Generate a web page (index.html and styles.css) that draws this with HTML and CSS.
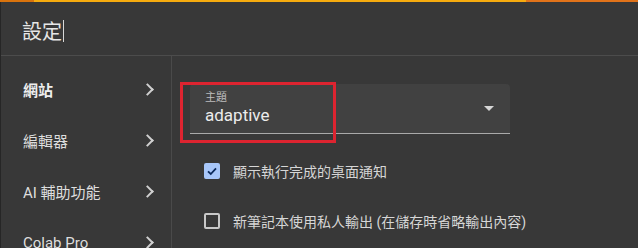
FILE: index.html
```html
<!DOCTYPE html>
<html lang="zh-Hant">
<head>
    <meta charset="UTF-8">
    <meta name="viewport" content="width=device-width, initial-scale=1.0">
    <title>設定</title>
    <link rel="stylesheet" href="styles.css">
</head>
<body>
    <div class="top-bar">
        <div class="bar-left"></div>
        <div class="bar-mid"></div>
        <div class="bar-right"></div>
    </div>

    <div class="dialog">
        <div class="dialog-header">
            <span class="dialog-title">設定</span><span class="caret"></span>
        </div>

        <div class="dialog-body">
            <div class="sidebar">
                <div class="nav-item active">
                    <span>網站</span>
                    <span class="chevron"></span>
                </div>
                <div class="nav-item">
                    <span>編輯器</span>
                    <span class="chevron"></span>
                </div>
                <div class="nav-item">
                    <span>AI 輔助功能</span>
                    <span class="chevron"></span>
                </div>
                <div class="nav-item">
                    <span>Colab Pro</span>
                    <span class="chevron"></span>
                </div>
            </div>

            <div class="content">
                <div class="select-field">
                    <div class="select-text">
                        <div class="select-label">主題</div>
                        <div class="select-value">adaptive</div>
                    </div>
                    <span class="select-arrow"></span>
                </div>
                <div class="highlight-box"></div>

                <div class="check-list">
                    <div class="check-row">
                        <span class="checkbox checked">
                            <svg width="12" height="12" viewBox="0 0 12 12">
                                <path d="M2 6.3 L4.8 9 L10 3.4" fill="none" stroke="#0b2a5c" stroke-width="1.8"/>
                            </svg>
                        </span>
                        <span class="check-label">顯示執行完成的桌面通知</span>
                    </div>
                    <div class="check-row">
                        <span class="checkbox"></span>
                        <span class="check-label">新筆記本使用私人輸出 (在儲存時省略輸出內容)</span>
                    </div>
                </div>
            </div>
        </div>
    </div>
</body>
</html>
```

FILE: styles.css
```css
body {
    margin: 0;
    background: #383838;
    color: #e3e3e3;
    font-family: 'Roboto', 'Noto Sans CJK TC', sans-serif;
    overflow: hidden;
    height: 248px;
}

.top-bar {
    display: flex;
    height: 2px;
}

.bar-left {
    width: 34px;
    background: #d9730d;
}

.bar-mid {
    width: 492px;
    background: #f6ab0f;
}

.bar-right {
    flex: 1;
    background: #e1731a;
}

.dialog {
    border-left: 1px solid #262626;
}

.dialog-header {
    height: 54px;
    display: flex;
    align-items: center;
    padding: 4px 0 0 21px;
    box-sizing: border-box;
    border-bottom: 1px solid #4c4c4c;
}

.dialog-title {
    font-size: 20px;
    color: #e6e6e6;
}

.caret {
    width: 1px;
    height: 22px;
    background: #d8d8d8;
    margin-left: 1px;
}

.dialog-body {
    display: flex;
}

.sidebar {
    width: 170px;
    border-right: 1px solid #4a4a4a;
    padding-top: 8px;
    height: 200px;
}

.nav-item {
    height: 51px;
    display: flex;
    align-items: center;
    justify-content: space-between;
    padding: 0 19px 0 22px;
    font-size: 15px;
    color: #dedede;
}

.nav-item.active {
    font-weight: bold;
    color: #eeeeee;
}

.chevron {
    width: 7px;
    height: 7px;
    border-top: 2px solid #d0d0d0;
    border-right: 2px solid #d0d0d0;
    transform: rotate(45deg);
}

.content {
    position: relative;
    flex: 1;
    padding: 28px 0 0 18px;
}

.select-field {
    width: 320px;
    height: 50px;
    box-sizing: border-box;
    background: #414141;
    border-bottom: 1px solid #a9a9a9;
    border-radius: 4px 4px 0 0;
    display: flex;
    align-items: center;
    justify-content: space-between;
    padding: 0 16px 0 15px;
}

.select-label {
    font-size: 11px;
    line-height: 14px;
    color: #bdbdbd;
}

.select-value {
    font-size: 17px;
    line-height: 21px;
    color: #ececec;
}

.select-arrow {
    width: 0;
    height: 0;
    border-left: 5px solid transparent;
    border-right: 5px solid transparent;
    border-top: 5px solid #d6d6d6;
}

.highlight-box {
    position: absolute;
    left: 8px;
    top: 26px;
    width: 150px;
    height: 55px;
    border: 3px solid #dd2430;
}

.check-list {
    margin-top: 12px;
}

.check-row {
    height: 50px;
    display: flex;
    align-items: center;
    padding-left: 14px;
    font-size: 14px;
    color: #d6d6d6;
}

.checkbox {
    width: 16px;
    height: 16px;
    box-sizing: border-box;
    border: 2px solid #c8c8c8;
    border-radius: 2px;
    margin-right: 13px;
    display: flex;
    align-items: center;
    justify-content: center;
}

.checkbox.checked {
    background: #a8c7fa;
    border-color: #a8c7fa;
}
```
